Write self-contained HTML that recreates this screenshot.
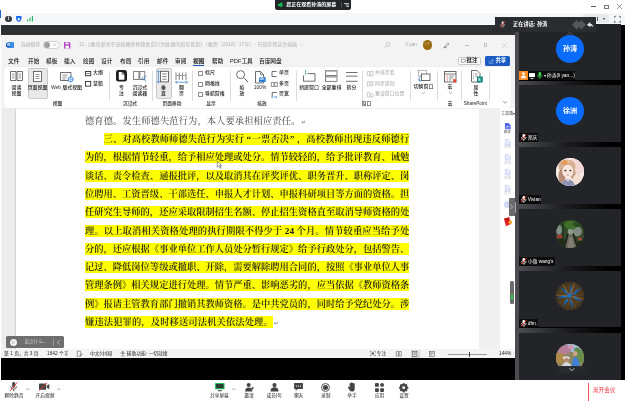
<!DOCTYPE html>
<html lang="zh-CN">
<head>
<meta charset="utf-8">
<title>会议</title>
<style>
html,body{margin:0;padding:0;}
body{width:625px;height:401px;position:relative;overflow:hidden;background:#fff;
 font-family:"Liberation Sans","Noto Sans CJK SC",sans-serif;color:#333;}
#root{position:absolute;left:0;top:0;width:625px;height:401px;overflow:hidden;background:#fff;will-change:transform;}
.a{position:absolute;}
.t{position:absolute;white-space:nowrap;line-height:1;}
svg{position:absolute;overflow:visible;}
/* ---------- top bars ---------- */
#titlebar{left:0;top:0;width:625px;height:13px;background:#fff;}
#lightbar{left:0;top:13px;width:625px;height:11.4px;background:#f6f7f9;}
#darkbar{left:0;top:25px;width:515px;height:9.7px;background:#2c3033;}
#pill{left:275.2px;top:0;width:75.6px;height:9.6px;background:#222427;border-radius:0 0 2.5px 2.5px;}
/* ---------- word ---------- */
#word{left:0;top:34.5px;width:515px;height:324px;background:#f3f3f3;overflow:hidden;}
#ribbon{left:4px;top:32.5px;width:507px;height:40.5px;background:#fff;border-radius:3px;box-shadow:0 0 1px rgba(0,0,0,.18);}
.tab{font-size:5.7px;color:#1a1a1a;top:24.2px;font-weight:500;}
.gl{font-size:4.7px;color:#1c1c1c;font-weight:500;top:67.3px;transform:translateX(-50%);}
.bl{font-size:4.9px;color:#1c1c1c;font-weight:500;transform:translateX(-50%);text-align:center;line-height:6.1px;}
.sl{font-size:4.9px;color:#1c1c1c;font-weight:500;}
.dv{width:0.6px;background:#dcdcdc;top:36px;height:30px;}
.sel{background:#e9e9e9;border:0.5px solid #c8c8c8;border-radius:1.5px;box-sizing:border-box;}
/* ---------- document ---------- */
#page{left:14.5px;top:74.5px;width:465px;height:240px;background:#fff;border-left:0.6px solid #d4d4d4;}
.ln{position:absolute;left:85px;width:324.2px;height:12.0px;font-family:"Liberation Serif","Noto Serif CJK SC",serif;
 font-size:9.27px;line-height:12.7px;font-weight:600;color:#1c1c1c;white-space:nowrap;text-align:justify;text-align-last:justify;}
.hl{background:#ffff00;}
.pm{font-family:"DejaVu Sans",sans-serif;font-size:5.8px;font-weight:400;color:#6a6a6a;margin-left:0.8px;vertical-align:0.3px;letter-spacing:0;}
/* ---------- right panel ---------- */
#rp{left:515px;top:25px;width:110px;height:354.6px;background:#000;}
#strip{left:515px;top:25px;width:4.2px;height:354.6px;background:#4a4c50;}
.tile{position:absolute;left:519.2px;width:101.5px;height:56.7px;background:#232427;}
.av{position:absolute;left:556px;width:28px;height:28px;border-radius:50%;overflow:hidden;}
.avt{color:#fff;font-weight:700;font-size:7.1px;text-align:center;line-height:28.8px;background:#0a6cff;}
.tag{position:absolute;left:519.2px;height:8.8px;background:#0c0c0d;color:#fff;font-size:4.8px;line-height:9.6px;white-space:nowrap;overflow:hidden;}
/* ---------- toolbar ---------- */
#toolbar{left:0;top:379.6px;width:625px;height:21.4px;background:#fff;}
.tl{font-size:4.7px;color:#222;top:14.8px;transform:translateX(-50%);}
</style>
</head>
<body>
<div id="root">
<!-- ======= top title bar ======= -->
<div class="a" id="titlebar"></div>
<div class="a" id="lightbar"></div>
<div class="a" id="darkbar"></div>
<div class="a" style="left:0;top:9.5px;width:1.2px;height:8.5px;background:#1e63d8;"></div>
<div class="a" id="pill">
  <svg style="left:3px;top:2.1px" width="5.6" height="5.6" viewBox="0 0 10 10"><path d="M0 3h3l4-3v10l-4-3H0z" fill="#19c15a"/><path d="M8.2 2.5q2 2.5 0 5" stroke="#19c15a" stroke-width="1.2" fill="none"/></svg>
  <div class="t" style="left:11px;top:2.4px;font-size:5px;color:#fff;font-weight:700;">您正在观看孙涛的屏幕</div>
  <div class="a" style="left:65.4px;top:1.5px;width:0.5px;height:6.5px;background:#4a4c50;"></div>
  <svg style="left:68.4px;top:2.8px" width="5" height="4" viewBox="0 0 10 8"><path d="M0 1h10M3 4h7M5 7h5" stroke="#fff" stroke-width="1.4"/></svg>
</div>
<!-- window controls -->
<div class="a" style="left:590.8px;top:6.1px;width:5.4px;height:0.7px;background:#555;"></div>
<div class="a" style="left:604.4px;top:4.8px;width:4.4px;height:4.2px;border:0.6px solid #777;box-sizing:border-box;"></div>
<svg style="left:616.6px;top:4.4px" width="5" height="5" viewBox="0 0 10 10"><path d="M0 0L10 10M10 0L0 10" stroke="#444" stroke-width="1.1"/></svg>
<!-- light bar icons -->
<div class="a" style="left:5.2px;top:15.6px;width:6.6px;height:6.6px;border-radius:50%;background:#3a3c40;"></div>
<div class="t" style="left:7.7px;top:16.6px;font-size:4.8px;color:#fff;font-weight:700;">i</div>
<svg style="left:16px;top:16px" width="5.6" height="6" viewBox="0 0 10 11"><path d="M0 0h10v5q0 4-5 6q-5-2-5-6z" fill="#1e6bf0"/><path d="M3 4h4v2q0 1.5-2 2.500q-2-1-2-2.500z" fill="#fff"/></svg>
<svg style="left:27.4px;top:16.4px" width="6" height="5.4" viewBox="0 0 10 9"><path d="M1 9V6M5 9V3M9 9V0" stroke="#17b75a" stroke-width="1.8"/></svg>
<div class="a" style="left:583px;top:14.400px;width:26px;height:8.800px;background:#e9eaec;border-radius:1px;"></div>
<div class="a" style="left:597px;top:16.500px;width:1px;height:4.500px;background:#55585c;"></div>
<div class="a" style="left:602.6px;top:18.200px;width:0;height:0;border-left:1.5px solid transparent;border-right:1.5px solid transparent;border-top:2.2px solid #2e2e2e;"></div>
<svg style="left:613.6px;top:15.6px" width="7" height="6.6" viewBox="0 0 10 10"><path d="M0.500 3V0.500h2.500M7 0.500h2.500v2.500M9.500 7v2.500H7M3 9.500H0.500V7" stroke="#444" stroke-width="1" fill="none"/></svg>

<!-- ======= shared Word window ======= -->
<div class="a" id="word">
  <!--WORD-TITLE-->
  <div class="a" style="left:7px;top:7.8px;width:6.800px;height:5.600px;background:#3b8de4;border-radius:0.800px;"></div>
  <div class="a" style="left:6.400px;top:8.9px;width:4px;height:4px;background:#1a5cc0;border-radius:0.500px;"></div>
  <div class="t" style="left:6.900px;top:9.2px;font-size:3.400px;color:#fff;font-weight:700;">W</div>
  <div class="t" style="left:21px;top:8.5px;font-size:4.800px;color:#a6a6a6;">自动保存</div>
  <div class="a" style="left:42.500px;top:6.5px;width:17px;height:7.800px;border:0.600px solid #d2d2d2;border-radius:3.900px;background:#fff;box-sizing:border-box;"></div>
  <div class="a" style="left:44px;top:7.6px;width:5.600px;height:5.600px;border-radius:50%;background:#a0a0a0;"></div>
  <svg style="left:53px;top:8.6px" width="3.600" height="3.600" viewBox="0 0 10 10"><path d="M0.500 0.500L9.500 9.500M9.500 0.500L0.500 9.500" stroke="#b5b5b5" stroke-width="1.600"/></svg>
  <svg style="left:63.800px;top:7.3px" width="6.400" height="6.400" viewBox="0 0 10 10"><path d="M0 0h8.500L10 1.500V10H0z" fill="#b146c2"/><rect x="2.200" y="0.800" width="5" height="2.800" fill="#fff"/><rect x="2.200" y="5.800" width="5.600" height="4.200" fill="#fff"/></svg>
  <div class="t" style="left:79px;top:8.6px;font-size:4.960px;color:#b0b0b0;letter-spacing:0.030px;">11.《教育部关于高校教师师德失范行为处理的指导意见》（教师〔2018〕17号）- 已保存到这台电脑</div>
  <svg style="left:300.400px;top:9.5px" width="3.600" height="2.200" viewBox="0 0 10 6"><path d="M0.500 0.500L5 5L9.500 0.500" stroke="#aaa" stroke-width="1.300" fill="none"/></svg>
  <svg style="left:384px;top:7.3px" width="6.400" height="6.400" viewBox="0 0 10 10"><circle cx="6.200" cy="3.800" r="3" fill="none" stroke="#b5b5b5" stroke-width="1"/><path d="M4 6L0.500 9.500" stroke="#b5b5b5" stroke-width="1.100"/></svg>
  <div class="t" style="left:405.400px;top:7.9px;font-size:5px;color:#ababab;">li yan</div>
  <div class="a" style="left:422.600px;top:5.7px;width:9.600px;height:9.600px;border-radius:50%;background:#9a6a13;"></div>
  <div class="t" style="left:425.200px;top:8.5px;font-size:3.800px;color:#e8cf9a;">LY</div>
  <svg style="left:443px;top:7.5px" width="7" height="6" viewBox="0 0 12 10"><path d="M3 7L8.500 1.500L10.500 3.500L5 9L2 10z" fill="none" stroke="#555" stroke-width="0.900"/><path d="M1 9.800q3-2 5 0" stroke="#555" stroke-width="0.700" fill="none"/></svg>
  <div class="a" style="left:464.800px;top:10.3px;width:4.400px;height:0.600px;background:#bdbdbd;"></div>
  <div class="a" style="left:483.600px;top:8.5px;width:3.800px;height:3.800px;border:0.600px solid #c4c4c4;box-sizing:border-box;"></div>
  <svg style="left:502px;top:8.1px" width="4.800" height="4.800" viewBox="0 0 10 10"><path d="M0 0L10 10M10 0L0 10" stroke="#bdbdbd" stroke-width="1.200"/></svg>
  <!--WORD-TABS-->
  <div class="t tab" style="left:8px">文件</div>
  <div class="t tab" style="left:28px">开始</div>
  <div class="t tab" style="left:46px">模板</div>
  <div class="t tab" style="left:64px">插入</div>
  <div class="t tab" style="left:83px">绘图</div>
  <div class="t tab" style="left:101px">设计</div>
  <div class="t tab" style="left:120px">布局</div>
  <div class="t tab" style="left:138px">引用</div>
  <div class="t tab" style="left:157px">邮件</div>
  <div class="t tab" style="left:175px">审阅</div>
  <div class="t tab" style="left:193px;font-weight:700;color:#222">视图</div>
  <div class="t tab" style="left:212px">帮助</div>
  <div class="t tab" style="left:230px">PDF工具</div>
  <div class="t tab" style="left:259px">百度网盘</div>
  <div class="a" style="left:193px;top:30.7px;width:11.400px;height:0.900px;background:#185abd;"></div>
  <div class="a" style="left:458px;top:22.1px;width:23px;height:8.600px;background:#fff;border:0.500px solid #c9c9c9;border-radius:1.400px;box-sizing:border-box;"></div>
  <svg style="left:460.600px;top:24.3px" width="4.600" height="4.200" viewBox="0 0 10 9"><path d="M0.500 0.500h9v6H4.500L2.500 8.500V6.500H0.500z" fill="none" stroke="#444" stroke-width="1"/></svg>
  <div class="t" style="left:466.600px;top:23.7px;font-size:5.400px;color:#222;font-weight:700;">批注</div>
  <div class="a" style="left:485px;top:21.7px;width:25px;height:9.400px;background:#1b5cc4;border-radius:1.600px;"></div>
  <svg style="left:489.400px;top:24.1px" width="4.600" height="4.600" viewBox="0 0 10 10"><path d="M0.500 3.500v6h8v-3" fill="none" stroke="#cfe0ff" stroke-width="1"/><path d="M4 6.500q0.500-4 5-4M7 0.500l2.500 2l-2.500 2" fill="none" stroke="#cfe0ff" stroke-width="1"/></svg>
  <div class="t" style="left:495.400px;top:23.7px;font-size:5.400px;color:#fff;font-weight:700;">共享</div>
  <div class="a" id="ribbon"></div>
  <!--WORD-RIBBON-->
  <div class="a sel" style="left:27.500px;top:33.9px;width:20px;height:30.600px;"></div>
  <div class="a sel" style="left:155.500px;top:33.9px;width:16px;height:30.600px;"></div>
  <div class="a dv" style="left:109px;"></div>
  <div class="a dv" style="left:151.6px;"></div>
  <div class="a dv" style="left:192px;"></div>
  <div class="a dv" style="left:229.6px;"></div>
  <div class="a dv" style="left:296px;"></div>
  <div class="a dv" style="left:362.4px;"></div>
  <div class="a dv" style="left:410.4px;"></div>
  <div class="a dv" style="left:437.4px;"></div>
  <div class="a dv" style="left:461.3px;"></div>
  <div class="a dv" style="left:489.4px;"></div>
  <div class="t gl" style="left:57.5px;">视图</div>
  <div class="t gl" style="left:130px;">沉浸式</div>
  <div class="t gl" style="left:172px;">页面移动</div>
  <div class="t gl" style="left:211px;">显示</div>
  <div class="t gl" style="left:262px;">缩放</div>
  <div class="t gl" style="left:366.5px;">窗口</div>
  <div class="t gl" style="left:450px;">宏</div>
  <div class="t gl" style="left:475.3px;">SharePoint</div>
  <svg style="left:10px;top:36.5px" width="13" height="10" viewBox="0 0 13 10"><path d="M0.500 0.500h5.500v9H0.500zM7 0.500h5.500v9H7z" fill="none" stroke="#4a4a4a" stroke-width="0.800"/><path d="M2 3h2.500M2 5h2.500M2 7h2.500M8.500 3h2.500M8.500 5h2.500M8.500 7h2.500" stroke="#4a4a4a" stroke-width="0.600"/></svg>
  <div class="t bl" style="left:16.5px;top:50.1px">阅读<br>视图</div>
  <svg style="left:33px;top:36.1px" width="9" height="11" viewBox="0 0 9 11"><rect x="0.500" y="0.500" width="8" height="10" fill="#fff" stroke="#4a4a4a" stroke-width="0.800"/><path d="M2.500 3.500h4M2.500 5.500h4M2.500 7.500h4" stroke="#4a4a4a" stroke-width="0.600"/></svg>
  <div class="t bl" style="left:37.5px;top:50.1px">页面视图</div>
  <svg style="left:60px;top:37.5px" width="13" height="10" viewBox="0 0 13 10"><path d="M0.500 0.500h10.500v8H0.500z" fill="none" stroke="#4a4a4a" stroke-width="0.800"/><path d="M2.500 3h5M2.500 5h4M2.500 7h3" stroke="#4a4a4a" stroke-width="0.600"/><circle cx="10.600" cy="7.300" r="2.500" fill="#fff" stroke="#2b7cd3" stroke-width="0.900"/><path d="M8.100 7.300h5M10.600 4.800v5" stroke="#2b7cd3" stroke-width="0.500"/></svg>
  <div class="t bl" style="left:66.5px;top:50.1px">Web 版式视图</div>
  <svg style="left:85.3px;top:36.5px" width="6.2" height="5.2" viewBox="0 0 6 5"><rect x="0.450" y="0.450" width="5.100" height="4.100" fill="none" stroke="#333" stroke-width="0.900"/><path d="M1.500 2.500h3" stroke="#333" stroke-width="0.700"/></svg>
  <div class="t sl" style="left:93px;top:36.7px;">大纲</div>
  <svg style="left:85.3px;top:46.9px" width="6.2" height="5.6" viewBox="0 0 6 5.500"><rect x="0.450" y="0.450" width="5.100" height="4.600" fill="none" stroke="#333" stroke-width="0.900"/></svg>
  <div class="t sl" style="left:93px;top:47.3px;">草稿</div>
  <svg style="left:116px;top:35.9px" width="11" height="11.6" viewBox="0 0 11 11.600"><rect x="0" y="0" width="11" height="11.600" rx="2.400" fill="#1e1e1e"/><path d="M2.800 2h3.600L8.400 4v5.800H2.800z" fill="#fff"/><path d="M6.200 2v2.200h2.200" fill="none" stroke="#1e1e1e" stroke-width="0.700"/></svg>
  <div class="t bl" style="left:121.5px;top:50.1px">专<br>注</div>
  <svg style="left:133px;top:36.1px" width="14" height="11" viewBox="0 0 14 11"><path d="M0.500 0.500h5.500v8H0.500zM6.800 0.500h5v8h-5z" fill="#fff" stroke="#4a4a4a" stroke-width="0.700"/><path d="M10.200 5.800l-1.600 1.700l1.600 1.700M12.800 4.600l-2 2.900l2 2.900" fill="none" stroke="#2b7cd3" stroke-width="0.800"/></svg>
  <div class="t bl" style="left:139.8px;top:50.1px">沉浸式<br>阅读器</div>
  <svg style="left:157px;top:35.1px" width="12" height="13.6" viewBox="0 0 12 13.600"><rect x="3.500" y="1.300" width="8" height="10.600" fill="#fff" stroke="#4a4a4a" stroke-width="0.800"/><path d="M5.300 4h4.400M5.300 6.600h4.400M5.300 9.200h4.400" stroke="#4a4a4a" stroke-width="0.700"/><path d="M1.400 0.800v12M0.200 2.200L1.400 0.600L2.600 2.200M0.200 11.400L1.400 13L2.600 11.400" fill="none" stroke="#2b7cd3" stroke-width="0.700"/></svg>
  <div class="t bl" style="left:163.5px;top:50.1px">垂<br>直</div>
  <svg style="left:175px;top:37.1px" width="13" height="11.6" viewBox="0 0 13 11.600"><path d="M1 0.500v7.500M4.300 0.500v7.500M7.600 0.500v7.500M11 0.500v7.500" stroke="#4a4a4a" stroke-width="0.700"/><path d="M1.800 3.500h2M5 3.500h2M8.300 3.500h2" stroke="#4a4a4a" stroke-width="0.600"/><path d="M0.500 10.200h12M2 9L0.500 10.200L2 11.400M11 9l1.500 1.200L11 11.400" fill="none" stroke="#2b7cd3" stroke-width="0.700"/></svg>
  <div class="t bl" style="left:181.5px;top:50.1px">翻<br>页</div>
  <div class="a" style="left:197.500px;top:36.4px;width:5px;height:5px;border:0.600px solid #8a8a8a;border-radius:0.800px;box-sizing:border-box;background:#fff;"></div>
  <div class="t sl" style="left:205px;top:36.5px;">标尺</div>
  <div class="a" style="left:197.500px;top:47.0px;width:5px;height:5px;border:0.600px solid #8a8a8a;border-radius:0.800px;box-sizing:border-box;background:#fff;"></div>
  <div class="t sl" style="left:205px;top:47.1px;">网格线</div>
  <div class="a" style="left:197.500px;top:57.6px;width:5px;height:5px;border:0.600px solid #8a8a8a;border-radius:0.800px;box-sizing:border-box;background:#fff;"></div>
  <div class="t sl" style="left:205px;top:57.7px;">导航窗格</div>
  <svg style="left:236px;top:35.5px" width="12.5" height="12.5" viewBox="0 0 12.500 12.500"><circle cx="4.600" cy="4.600" r="4" fill="none" stroke="#4a4a4a" stroke-width="0.800"/><path d="M7.500 7.500L12 12" stroke="#4a4a4a" stroke-width="0.900"/></svg>
  <div class="t bl" style="left:242px;top:50.1px">缩<br>放</div>
  <svg style="left:255px;top:36.1px" width="11" height="12.5" viewBox="0 0 11 12.500"><path d="M0.500 0.500h5L8.500 3.500v8.500H0.500z" fill="#fff" stroke="#4a4a4a" stroke-width="0.800"/><path d="M5.500 0.500v3h3" fill="none" stroke="#4a4a4a" stroke-width="0.600"/><rect x="4" y="6" width="6.600" height="5" fill="#2b7cd3"/></svg>
  <div class="t" style="left:259.200px;top:43.1px;font-size:2.800px;color:#fff;font-weight:700;">100</div>
  <div class="t bl" style="left:260px;top:50.1px">100%</div>
  <svg style="left:271px;top:36.3px" width="6" height="6" viewBox="0 0 6 6"><path d="M5.500 0.500H1v5h4.500" fill="none" stroke="#4a4a4a" stroke-width="0.800"/></svg>
  <div class="t sl" style="left:279px;top:36.5px;">单页</div>
  <svg style="left:270.5px;top:47.1px" width="7" height="5" viewBox="0 0 7 5"><path d="M0.400 0.500h2.600v4H0.400zM3.800 0.500h2.600v4H3.800z" fill="none" stroke="#4a4a4a" stroke-width="0.600"/></svg>
  <div class="t sl" style="left:279px;top:47.1px;">多页</div>
  <svg style="left:271px;top:57.1px" width="6.5" height="6" viewBox="0 0 6.500 6"><path d="M5.800 0.500H1.200v3.500" fill="none" stroke="#4a4a4a" stroke-width="0.800"/><path d="M0.500 5h5.500M1.500 4.200L0.500 5l1 0.800M5 4.200l1 0.800l-1 0.800" fill="none" stroke="#2b7cd3" stroke-width="0.600"/></svg>
  <div class="t sl" style="left:279px;top:57.7px;">页宽</div>
  <svg style="left:303px;top:35.1px" width="12.5" height="12" viewBox="0 0 12.500 12"><path d="M4.500 3.600h7.500v7.600H0.500V5.500" fill="none" stroke="#4a4a4a" stroke-width="0.800"/><path d="M2.600 0.200v4.600" stroke="#21a366" stroke-width="0.800"/></svg>
  <div class="t bl" style="left:309px;top:50.1px">新建窗口</div>
  <svg style="left:325px;top:35.5px" width="12.5" height="12" viewBox="0 0 12.500 12"><rect x="0.500" y="0.500" width="11.500" height="5" fill="#fff" stroke="#4a4a4a" stroke-width="0.700"/><rect x="0.500" y="6.300" width="11.500" height="5" fill="#fff" stroke="#4a4a4a" stroke-width="0.700"/><rect x="0.500" y="0.500" width="11.500" height="1.500" fill="#bbb"/><rect x="0.500" y="6.300" width="11.500" height="1.500" fill="#bbb"/></svg>
  <div class="t bl" style="left:331.5px;top:50.1px">全部重排</div>
  <svg style="left:346px;top:37.1px" width="11.5" height="10" viewBox="0 0 11.500 10"><path d="M0 0.500h11.500M0 9.300h11.500" stroke="#4a4a4a" stroke-width="0.800"/><path d="M0 4.200h11.500" stroke="#999" stroke-width="1.400"/></svg>
  <div class="t bl" style="left:351.5px;top:50.1px">拆分</div>
  <svg style="left:367px;top:36.3px" width="6.5" height="5.5" viewBox="0 0 6.500 5.500"><path d="M0.400 0.500h2.400v4.500H0.400zM3.700 0.500h2.400v4.500H3.700z" fill="none" stroke="#b9b9b9" stroke-width="0.700"/></svg>
  <div class="t sl" style="left:375px;top:36.5px;color:#b9b9b9">并排查看</div>
  <svg style="left:367px;top:46.9px" width="6.5" height="5.5" viewBox="0 0 6.500 5.500"><path d="M0.400 0.500h2.400v4.500H0.400zM4 0.500h2v4.500H4z" fill="none" stroke="#b9b9b9" stroke-width="0.700"/></svg>
  <div class="t sl" style="left:375px;top:47.1px;color:#b9b9b9">同步滚动</div>
  <svg style="left:367px;top:57.5px" width="6.5" height="5.5" viewBox="0 0 6.500 5.500"><path d="M0.400 0.500h2.400v4.500H0.400zM3.700 2h2.400v3H3.700z" fill="none" stroke="#b9b9b9" stroke-width="0.700"/></svg>
  <div class="t sl" style="left:375px;top:57.7px;color:#b9b9b9">重设窗口位置</div>
  <svg style="left:417px;top:35.1px" width="13.5" height="12.5" viewBox="0 0 13.500 12.500"><rect x="1.500" y="0.500" width="8" height="5.500" fill="#fff" stroke="#999" stroke-width="0.700"/><rect x="4.500" y="4" width="8.500" height="6.500" fill="#fff" stroke="#4a4a4a" stroke-width="0.800"/><path d="M3.500 6.500q-3 1.500-1 4.500l1.800-0.300M2.500 11l0.200-1.800" fill="none" stroke="#2b7cd3" stroke-width="0.800"/></svg>
  <div class="t bl" style="left:423.5px;top:49.7px">切换窗口</div>
  <svg style="left:422px;top:57.9px" width="3" height="1.8" viewBox="0 0 10 6"><path d="M0.500 0.500L5 5L9.500 0.500" stroke="#4a4a4a" stroke-width="1.500" fill="none"/></svg>
  <svg style="left:444px;top:36.1px" width="12.5" height="12" viewBox="0 0 12.500 12"><rect x="0.500" y="0.500" width="11.500" height="10.500" fill="#fff" stroke="#4a4a4a" stroke-width="0.800"/><path d="M0.500 3h11.500" stroke="#4a4a4a" stroke-width="0.700"/><path d="M2.500 5h1.500M2.500 7h1.500M2.500 9h1.500" stroke="#e8443a" stroke-width="0.700"/><path d="M5 5h5M5 7h4M5 9h2" stroke="#4a4a4a" stroke-width="0.600"/><path d="M8.600 8.200h3.600v3.400H9.800z" fill="#e8443a"/></svg>
  <div class="t bl" style="left:450px;top:49.7px">宏</div>
  <svg style="left:448.5px;top:57.9px" width="3" height="1.8" viewBox="0 0 10 6"><path d="M0.500 0.500L5 5L9.500 0.500" stroke="#4a4a4a" stroke-width="1.500" fill="none"/></svg>
  <svg style="left:470.5px;top:35.5px" width="12" height="12.5" viewBox="0 0 12 12.500"><path d="M0.500 0.500h5.500L9 3.500v8.500H0.500z" fill="#fff" stroke="#4a4a4a" stroke-width="0.800"/><path d="M2 4h1M4 4h2.500M2 6.200h1M4 6.200h2.500M2 8.400h1" stroke="#4a4a4a" stroke-width="0.600"/><rect x="6" y="6.600" width="5.800" height="5.800" rx="0.600" fill="#0f8a7f"/></svg>
  <div class="t" style="left:478.100px;top:43.0px;font-size:4px;color:#fff;font-weight:700;">S</div>
  <div class="t bl" style="left:476px;top:50.1px">属<br>性</div>
  <svg style="left:503.4px;top:66.7px" width="4.2" height="2.6" viewBox="0 0 10 6"><path d="M0.500 0.500L5 5L9.500 0.500" stroke="#4a4a4a" stroke-width="1.300" fill="none"/></svg>
  <!-- document area -->
  <div class="a" style="left:1.5px;top:73.5px;width:13px;height:241px;background:#ececec;"></div>
  <div class="a" id="page"></div>
  <div class="a" style="left:479.3px;top:73px;width:21px;height:241.5px;background:#f0f0f0;"></div>
  <div class="a" style="left:500px;top:73px;width:15px;height:241.5px;background:#fff;"></div>
  <!--DOC-->
  <div class="ln" style="top:80.50px;font-weight:400;color:#444;text-align-last:left;letter-spacing:0.1px;">德育德。发生师德失范行为，本人要承担相应责任。<span class="pm">↵</span></div>
  <div class="ln hl" style="top:98.50px;left:103.6px;width:305.6px;">三、对高校教师师德失范行为实行<span style="margin:0 0.5px 0 2.5px">“</span>一票否决<span style="margin:0 2.5px 0 0.5px">”</span>，高校教师出现违反师德行</div>
  <div class="ln hl" style="top:116.80px;">为的，根据情节轻重，给予相应处理或处分。情节较轻的，给予批评教育、诫勉</div>
  <div class="ln hl" style="top:135.10px;">谈话、责令检查、通报批评，以及取消其在评奖评优、职务晋升、职称评定、岗</div>
  <div class="ln hl" style="top:153.40px;">位聘用、工资晋级、干部选任、申报人才计划、申报科研项目等方面的资格。担</div>
  <div class="ln hl" style="top:171.70px;">任研究生导师的，还应采取限制招生名额、停止招生资格直至取消导师资格的处</div>
  <div class="ln hl" style="top:190.00px;">理。以上取消相关资格处理的执行期限不得少于 24 个月。情节较重应当给予处</div>
  <div class="ln hl" style="top:208.30px;">分的，还应根据《事业单位工作人员处分暂行规定》给予行政处分，包括警告、</div>
  <div class="ln hl" style="top:226.60px;">记过、降低岗位等级或撤职、开除，需要解除聘用合同的，按照《事业单位人事</div>
  <div class="ln hl" style="top:244.90px;">管理条例》相关规定进行处理。情节严重、影响恶劣的，应当依据《教师资格条</div>
  <div class="ln hl" style="top:263.20px;">例》报请主管教育部门撤销其教师资格。是中共党员的，同时给予党纪处分。涉</div>
  <div class="ln" style="top:281.50px;text-align-last:left;letter-spacing:0.13px;"><span class="hl" style="display:inline-block;height:12.0px;">嫌违法犯罪的，及时移送司法机关依法处理。</span><span class="pm">↵</span></div>
  <!--/DOC-->
  <!--SIDEBAR-->
  <div class="t" style="left:501px;top:77.1px;font-size:4px;color:#444;">工具箱▾</div>
  <svg style="left:504.800px;top:88.7px" width="5.600" height="6.400" viewBox="0 0 8 9"><path d="M0 0h5l3 3v6H0z" fill="#5468ee"/><path d="M1.500 5h5M1.500 7h3" stroke="#fff" stroke-width="0.800"/></svg>
  <div class="t" style="left:507.500px;top:96.5px;font-size:3.400px;color:#555;transform:translateX(-50%);">翻译</div>
  <svg style="left:504.800px;top:104.1px" width="5.600" height="6.400" viewBox="0 0 8 9"><path d="M0.600 0.600h4.200l2.600 2.600v5.200H0.600z" fill="#eef0fd" stroke="#c3caf6" stroke-width="1.100"/><path d="M2 5.500h4" stroke="#c3caf6" stroke-width="0.900"/></svg>
  <div class="t" style="left:507.500px;top:111.9px;font-size:3.400px;color:#c8c8d4;transform:translateX(-50%);">转换</div>
  <svg style="left:504.800px;top:119.5px" width="5.600" height="6.400" viewBox="0 0 8 9"><path d="M0.600 0.600h4.200l2.600 2.600v5.200H0.600z" fill="#eef0fd" stroke="#c3caf6" stroke-width="1.100"/><path d="M2 5.500h4" stroke="#c3caf6" stroke-width="0.900"/></svg>
  <div class="t" style="left:507.500px;top:127.3px;font-size:3.400px;color:#c8c8d4;transform:translateX(-50%);">编辑</div>
  <svg style="left:504.800px;top:134.5px" width="5.600" height="6.400" viewBox="0 0 8 9"><path d="M0.600 0.600h4.200l2.600 2.600v5.200H0.600z" fill="#eef0fd" stroke="#c3caf6" stroke-width="1.100"/><path d="M2 5.500h4" stroke="#c3caf6" stroke-width="0.900"/></svg>
  <div class="t" style="left:507.500px;top:142.3px;font-size:3.400px;color:#c8c8d4;transform:translateX(-50%);">压缩</div>
  <svg style="left:504.800px;top:150.1px" width="5.600" height="6.400" viewBox="0 0 8 9"><path d="M0.600 0.600h4.200l2.600 2.600v5.200H0.600z" fill="#eef0fd" stroke="#c3caf6" stroke-width="1.100"/><path d="M2 5.500h4" stroke="#c3caf6" stroke-width="0.900"/></svg>
  <div class="t" style="left:507.500px;top:157.9px;font-size:3.400px;color:#c8c8d4;transform:translateX(-50%);">更多</div>
  <div class="a" style="left:503.800px;top:166.3px;width:7px;height:7px;border-radius:50%;background:#cdd6f6;"></div>
  <div class="a" style="left:508.600px;top:163.5px;width:6.600px;height:17.600px;background:#6b6b6b;border-radius:1px 0 0 1px;"></div>
  <svg style="left:510.400px;top:169.5px" width="3" height="5.400" viewBox="0 0 6 10"><path d="M0.800 0.500L5.200 5L0.800 9.500" stroke="#e8e8e8" stroke-width="1.200" fill="none"/></svg>
  <svg style="left:503px;top:182.1px" width="9.600" height="10" viewBox="0 0 10 10"><path d="M1 1.500L6.500 0L8.500 7L3 9.500z" fill="#e0261f"/><path d="M1 1.500l4.500 3L6.500 0" fill="#c21710"/><circle cx="7.600" cy="5.300" r="1.900" fill="#f8a229"/></svg>
  <div class="a" style="left:510.400px;top:246.5px;width:3.300px;height:23px;background:#6a6a6a;border-radius:1.600px;"></div>
  <div class="a" style="left:511.200px;top:259.5px;width:1.700px;height:6.400px;background:#35c24a;border-radius:0.800px;"></div>
  <!--STATUS-->
  <div class="a" style="left:0;top:314.5px;width:515px;height:9.500px;background:#f3f3f3;"></div>
  <div class="t" style="left:4px;top:317.8px;font-size:4.800px;color:#262626;">第 1 页，共 3 页</div>
  <div class="t" style="left:47px;top:317.8px;font-size:4.800px;color:#262626;">1642 个字</div>
  <svg style="left:77px;top:316.7px" width="5.600" height="5.600" viewBox="0 0 10 10"><path d="M0.500 0.500h6v9h-6z" fill="none" stroke="#444" stroke-width="0.900"/><path d="M5 6.500l1.800 2L9.800 4.500" fill="none" stroke="#444" stroke-width="1"/></svg>
  <div class="t" style="left:90px;top:317.8px;font-size:4.800px;color:#262626;">中文(中国)</div>
  <svg style="left:120px;top:316.5px" width="5.600" height="6" viewBox="0 0 10 11"><circle cx="5" cy="1.800" r="1.500" fill="#444"/><path d="M0.500 4h9M5 4v3.500M5 7.500L2.500 10.500M5 7.500l2.500 3" stroke="#444" stroke-width="1" fill="none"/></svg>
  <div class="t" style="left:126.6px;top:317.8px;font-size:4.800px;color:#262626;">辅助功能: 一切就绪</div>
  <svg style="left:370px;top:316.9px" width="5.600" height="5" viewBox="0 0 10 9"><path d="M0.500 3V0.500h2.500M7 0.500h2.500V3M9.500 6v2.500H7M3 8.500H0.500V6" fill="none" stroke="#444" stroke-width="0.900"/><rect x="3" y="2.800" width="4" height="3.400" fill="#444"/></svg>
  <div class="t" style="left:376.6px;top:317.8px;font-size:4.800px;color:#262626;">专注</div>
  <svg style="left:396.400px;top:316.7px" width="5.600" height="5.600" viewBox="0 0 10 10"><path d="M0.500 1h4v8h-4zM5.500 1h4v8h-4z" fill="none" stroke="#444" stroke-width="0.900"/></svg>
  <div class="a" style="left:410.600px;top:315.1px;width:9px;height:8.400px;background:#d8d8d8;"></div>
  <svg style="left:412.400px;top:316.7px" width="5.200" height="5.600" viewBox="0 0 9 10"><rect x="0.500" y="0.500" width="8" height="9" fill="#fff" stroke="#333" stroke-width="0.900"/><path d="M2 3h5M2 5h5M2 7h5" stroke="#333" stroke-width="0.800"/></svg>
  <svg style="left:429px;top:316.7px" width="5.600" height="5.600" viewBox="0 0 10 10"><rect x="0.500" y="0.500" width="9" height="9" fill="none" stroke="#444" stroke-width="0.900"/><path d="M2 3h6M2 5h6M2 7h4" stroke="#444" stroke-width="0.800"/></svg>
  <div class="a" style="left:448px;top:319.5px;width:39.400px;height:0.500px;background:#9a9a9a;"></div>
  <div class="a" style="left:469px;top:317.1px;width:1.200px;height:5px;background:#444;"></div>
  <div class="t" style="left:499px;top:317.8px;font-size:4.800px;color:#262626;">144%</div>
  <div class="a" style="left:6.300px;top:301.8px;width:57.700px;height:11.700px;background:#6e6e6e;border-radius:1.500px;"></div>
  <div class="a" style="left:9.500px;top:304.2px;width:7px;height:7px;border-radius:50%;background:#f4f4f4;"></div>
  <svg style="left:11px;top:306.3px" width="4" height="3.200" viewBox="0 0 8 6"><circle cx="2" cy="1" r="0.900" fill="#6e6e6e"/><circle cx="6" cy="1" r="0.900" fill="#6e6e6e"/><path d="M1.500 3.500q2.500 2.500 5 0" stroke="#6e6e6e" stroke-width="1" fill="none"/></svg>
  <div class="t" style="left:24.400px;top:305.4px;font-size:4.600px;color:#cfcfcf;">说点什么...</div>
  <div class="a" style="left:53px;top:304.1px;width:0.500px;height:7px;background:#9a9a9a;"></div>
  <svg style="left:56.600px;top:305.3px" width="3" height="4.800" viewBox="0 0 6 10"><path d="M5.200 0.500L0.800 5L5.200 9.500" stroke="#eee" stroke-width="1.300" fill="none"/></svg>
  <svg style="left:217px;top:126.1px" width="5" height="7.500" viewBox="0 0 8 12"><path d="M0.500 0.500V10L3 7.500L5 11.500L6.500 10.800L4.600 7H7.500z" fill="#fff" stroke="#333" stroke-width="0.800"/></svg>
</div>
<!-- black below shared screen -->
<div class="a" style="left:0;top:358.4px;width:515px;height:21.2px;background:#000;"></div>

<div class="a" style="left:0;top:24.4px;width:1.2px;height:355.2px;background:#fff;"></div>
<!-- ======= right participants panel ======= -->
<div class="a" id="rp"></div>
<div class="a" id="strip"></div>
<div class="a" style="left:515.2px;top:202px;width:1.3px;height:10.5px;background:#a4a6aa;border-radius:0.6px;"></div>
<!--TILES-->
<div class="tile" style="top:23.8px;height:56.7px;"></div>
<div class="av avt" style="top:35.1px;">孙涛</div>
<div class="tag" style="top:71.2px;width:56.3px;"><div class="a" style="left:0;top:0;width:8.6px;height:8.8px;background:#ff8a1f;"></div><svg style="left:1.8px;top:1.300px" width="5" height="6.400" viewBox="0 0 10 12"><circle cx="5" cy="3" r="2.800" fill="#fff"/><path d="M0 12q0-5.500 5-5.500q5 0 5 5.500z" fill="#fff"/></svg><svg style="left:9.400px;top:1.500px" width="6" height="6.200" viewBox="0 0 10 10"><rect x="0" y="0" width="10" height="6.500" fill="#fff"/><rect x="2.500" y="8" width="5" height="1.500" fill="#fff"/></svg><svg style="left:17.800px;top:1px" width="5.600" height="6.800" viewBox="0 0 10 12"><rect x="2.800" y="0" width="4.400" height="7.400" rx="2.200" fill="#3ddc4e"/><path d="M1 5.500q0 4 4 4q4 0 4-4M5 9.500V12" stroke="#3ddc4e" stroke-width="1.400" fill="none"/></svg><span style="margin-left:24.600px;font-size:3.600px;vertical-align:0.300px;">▾</span><span style="margin-left:1px;">孙涛(li yan...)</span></div>
<div class="tile" style="top:85.3px;height:56.7px;"></div>
<div class="av avt" style="top:96.6px;">徐洲</div>
<div class="tag" style="top:133.2px;width:19px;"><svg style="left:2.200px;top:1.200px" width="5.600" height="6.800" viewBox="0 0 10 12"><rect x="2.600" y="0" width="4.800" height="7.400" rx="2.400" fill="#fff"/><path d="M1 5.500q0 4 4 4q4 0 4-4M5 9.500V12" stroke="#fff" stroke-width="1.400" fill="none"/><path d="M0.300 11L9.700 0.500" stroke="#ff3b30" stroke-width="1.700"/></svg><span style="margin-left:8.600px;">郑庆</span></div>
<div class="tile" style="top:147.0px;height:56.7px;"></div>
<div class="av" style="top:158.3px;background:#f6ebe6;"><svg style="left:0;top:0" width="28" height="28" viewBox="0 0 28 28">
<rect width="28" height="28" fill="#f7ece8"/>
<ellipse cx="21" cy="8" rx="8" ry="9" fill="#f3d9d3"/>
<ellipse cx="11" cy="8.500" rx="8.500" ry="7" fill="#d4ae90"/>
<ellipse cx="6" cy="18" rx="3.600" ry="7" fill="#b88e76"/>
<ellipse cx="17" cy="16" rx="2.500" ry="5" fill="#c39a80"/>
<ellipse cx="11.800" cy="13.200" rx="5.600" ry="6.400" fill="#f8e6dc"/>
<ellipse cx="9" cy="4.600" rx="3.600" ry="2" fill="#e79a55"/>
<circle cx="12.500" cy="3.800" r="1.300" fill="#f0c9a0"/>
<ellipse cx="9.400" cy="12.600" rx="1.100" ry="0.800" fill="#3d2c28"/><ellipse cx="14.400" cy="12.600" rx="1.100" ry="0.800" fill="#3d2c28"/>
<ellipse cx="11.900" cy="17" rx="1.200" ry="0.600" fill="#d77c80"/>
<path d="M5 28q1.500-6.500 7-7q5 0.500 7.500 7z" fill="#8e92b4"/>
<path d="M9.500 21.500l2.500 2l2.500-2" fill="#f3dccf"/>
<ellipse cx="21.500" cy="21.500" rx="4.500" ry="5.500" fill="#f4dfd4"/>
</svg></div>
<div class="tag" style="top:194.9px;width:22.3px;"><svg style="left:2.200px;top:1.200px" width="5.600" height="6.800" viewBox="0 0 10 12"><rect x="2.600" y="0" width="4.800" height="7.400" rx="2.400" fill="#fff"/><path d="M1 5.500q0 4 4 4q4 0 4-4M5 9.500V12" stroke="#fff" stroke-width="1.400" fill="none"/><path d="M0.300 11L9.700 0.500" stroke="#ff3b30" stroke-width="1.700"/></svg><span style="margin-left:8.600px;">Vivian</span></div>
<div class="tile" style="top:208.9px;height:56.7px;"></div>
<div class="av" style="top:220.2px;background:#3c5230;"><svg style="left:0;top:0" width="28" height="28" viewBox="0 0 28 28">
<rect width="28" height="28" fill="#33452a"/>
<rect x="0" y="0" width="28" height="10" fill="#2f4c24"/>
<ellipse cx="21.500" cy="11.500" rx="4.500" ry="5" fill="#7d8a80"/>
<ellipse cx="14.500" cy="12" rx="2.800" ry="4" fill="#8c988c"/>
<ellipse cx="3" cy="10" rx="3" ry="5" fill="#7f8f86"/>
<ellipse cx="15" cy="5" rx="7" ry="4.200" fill="#3f6e2a"/>
<ellipse cx="22" cy="4" rx="5" ry="3" fill="#2c4a22"/>
<path d="M12.500 14.500h4l4.500 13.500h-12.500z" fill="#6a665e"/>
<path d="M13.500 17h2.500l2.500 11h-7z" fill="#827d74"/>
<path d="M12.200 13.500l-4 14.500M17 13.500l4.500 14.500" stroke="#161d14" stroke-width="1.300"/>
<rect x="6.600" y="3" width="0.900" height="23" fill="#1a2417"/>
<ellipse cx="3.600" cy="16.500" rx="3" ry="1.700" fill="#a3382f"/>
<ellipse cx="24" cy="19" rx="2" ry="1.600" fill="#b24a33"/>
<ellipse cx="4.500" cy="23" rx="5" ry="4" fill="#1f2d1a"/>
<ellipse cx="24.500" cy="24.500" rx="4.500" ry="3.500" fill="#1f2b1a"/>
</svg></div>
<div class="tag" style="top:256.8px;width:35.8px;"><svg style="left:2.200px;top:1.200px" width="5.600" height="6.800" viewBox="0 0 10 12"><rect x="2.600" y="0" width="4.800" height="7.400" rx="2.400" fill="#fff"/><path d="M1 5.500q0 4 4 4q4 0 4-4M5 9.500V12" stroke="#fff" stroke-width="1.400" fill="none"/><path d="M0.300 11L9.700 0.500" stroke="#ff3b30" stroke-width="1.700"/></svg><span style="margin-left:8.600px;">小微 wang&#39;s</span></div>
<div class="tile" style="top:270.8px;height:56.7px;"></div>
<div class="av" style="top:282.1px;background:#4a3a22;"><svg style="left:0;top:0" width="28" height="28" viewBox="0 0 28 28">
<rect width="28" height="28" fill="#4b3b24"/>
<path d="M14 13L3 3L9 12L1 16L10 16L6 26L13 18L17 27L17 17L27 20L19 13L26 5L17 10L15 1z" fill="#1b5c9e"/>
<path d="M14 13L8 6L11 12L6 15L11 15.500L9 21L13.500 16.500L15.500 22L16 15.500L22 17L17.500 13L21 8L16 11L14.500 5z" fill="#2273c4"/>
<path d="M14 14L2 8M14 14L24 3M14 14L26 24M14 14L3 22M14 14L12 0M14 14L28 12M14 14L11 28M14 14L21 28" stroke="#5e4220" stroke-width="1.700" opacity="0.950"/>
<path d="M14 14L0 13M14 14L19 0M14 14L27 17M14 14L6 1" stroke="#8a6430" stroke-width="1.200" opacity="0.950"/>
<circle cx="14" cy="14" r="13.500" fill="none" stroke="#3f3320" stroke-width="3.500" stroke-dasharray="2.500 1.500" opacity="0.900"/>
<circle cx="13.500" cy="13.500" r="2.200" fill="#1f6fc0"/>
</svg></div>
<div class="tag" style="top:318.7px;width:19px;"><svg style="left:2.200px;top:1.200px" width="5.600" height="6.800" viewBox="0 0 10 12"><rect x="2.600" y="0" width="4.800" height="7.400" rx="2.400" fill="#fff"/><path d="M1 5.500q0 4 4 4q4 0 4-4M5 9.500V12" stroke="#fff" stroke-width="1.400" fill="none"/><path d="M0.300 11L9.700 0.500" stroke="#ff3b30" stroke-width="1.700"/></svg><span style="margin-left:8.600px;">dfm.</span></div>
<div class="tile" style="top:332.8px;height:46.8px;"></div>
<div class="av" style="top:344.1px;background:#8a8a66;"><svg style="left:0;top:0" width="28" height="28" viewBox="0 0 28 28">
<rect width="28" height="28" fill="#8c8660"/>
<rect x="9" y="0" width="19" height="8" fill="#9cc0e0"/>
<ellipse cx="8" cy="5.500" rx="7.500" ry="5" fill="#b57f9a"/>
<ellipse cx="15" cy="3" rx="3" ry="2.500" fill="#c99ab0"/>
<ellipse cx="3.500" cy="14" rx="5" ry="5.500" fill="#b08a4a"/>
<ellipse cx="25" cy="12" rx="5" ry="6.500" fill="#6a8c4a"/>
<ellipse cx="21" cy="6" rx="3" ry="2.500" fill="#5f8a48"/>
<ellipse cx="19.200" cy="9.500" rx="2.300" ry="2.500" fill="#cfa48c"/>
<path d="M15.500 28q0-14.500 3.700-15q4.300 0.500 5 15z" fill="#3f7fd6"/>
<ellipse cx="10.300" cy="14" rx="3.400" ry="1.800" fill="#e9e9ec"/>
<ellipse cx="10.500" cy="16" rx="2.400" ry="2.500" fill="#b98f7a"/>
<path d="M5 28q0-9.500 5.500-10q5.500 0.500 6 10z" fill="#d9d9dc"/>
<rect x="0" y="22.500" width="28" height="5.500" fill="#33363a"/>
</svg></div>
<div class="a" style="left:519.2px;top:80.5px;width:105.8px;height:4.8px;background:linear-gradient(90deg,#4a4c50 0,#1c1c1e 45%,#000 85%);"></div>
<div class="a" style="left:519.2px;top:142.0px;width:105.8px;height:5.0px;background:linear-gradient(90deg,#4a4c50 0,#1c1c1e 45%,#000 85%);"></div>
<div class="a" style="left:519.2px;top:203.7px;width:105.8px;height:5.2px;background:linear-gradient(90deg,#4a4c50 0,#1c1c1e 45%,#000 85%);"></div>
<div class="a" style="left:519.2px;top:265.6px;width:105.8px;height:5.2px;background:linear-gradient(90deg,#4a4c50 0,#1c1c1e 45%,#000 85%);"></div>
<div class="a" style="left:519.2px;top:327.5px;width:105.8px;height:5.3px;background:linear-gradient(90deg,#4a4c50 0,#1c1c1e 45%,#000 85%);"></div>
<div class="a" style="left:556.5px;top:366px;width:30.5px;height:7.6px;background:rgba(40,41,44,.88);border-radius:1px;"></div>
<svg style="left:568.6px;top:368.300px" width="5.600" height="3.200" viewBox="0 0 10 6"><path d="M0.500 0.500L5 5L9.500 0.500" stroke="#fff" stroke-width="1.400" fill="none"/></svg>
<div class="a" style="left:495px;top:17.2px;width:101px;height:14.4px;background:#2b2c2f;"></div>
<svg style="left:500.400px;top:21px" width="5.400" height="7" viewBox="0 0 10 12"><rect x="3.200" y="0" width="3.600" height="7" rx="1.800" fill="#ddd"/><path d="M1.300 5.500q0 3.700 3.700 3.700q3.700 0 3.700-3.700M5 9.200V12" stroke="#ddd" stroke-width="1.100" fill="none"/><path d="M0.500 11L9.500 0.500" stroke="#ff3b30" stroke-width="1.600"/></svg>
<div class="t" style="left:513px;top:21.800px;font-size:5.200px;color:#fff;font-weight:700;">正在讲话: 孙涛</div>
<svg style="left:572px;top:19.800px" width="14" height="9.600" viewBox="0 0 14 9.600"><path d="M0 4.800L4.600 0L9.200 4.800L4.600 9.600zM4.800 4.800L9.400 0L14 4.800L9.400 9.600z" fill="#55575b"/></svg>
<svg style="left:587px;top:22px" width="6.400" height="5.400" viewBox="0 0 12 10"><path d="M0 5L6 0V3Q11 3 12 10Q10 6.500 6 7V10z" fill="#e8e8e8"/></svg>
<svg style="left:567px;top:31.600px" width="6" height="3" viewBox="0 0 12 6"><path d="M0 6L6 0.500L12 6" stroke="#777" stroke-width="1" fill="#2b2c2f"/></svg>
<!--/TILES-->

<!-- ======= bottom toolbar ======= -->
<div class="a" id="toolbar">
<!--TOOLBAR-->
<svg style="left:10.200px;top:2.500px" width="7.400" height="9.800" viewBox="0 0 10 13"><rect x="3" y="0" width="4" height="7.500" rx="2" fill="#444"/><path d="M1.200 5.800q0 3.800 3.800 3.800q3.800 0 3.800-3.800M5 9.600V12.500" stroke="#444" stroke-width="1.100" fill="none"/><path d="M0.300 12L9.700 0.500" stroke="#f0353a" stroke-width="1.300"/></svg>
<div class="t tl" style="left:14px;">解除静音</div>
<svg style="left:26.400px;top:8.200px" width="3.600" height="2.200" viewBox="0 0 10 6"><path d="M0.500 5.500L5 1L9.500 5.500" stroke="#555" stroke-width="1.400" fill="none"/></svg>
<svg style="left:39.200px;top:3.600px" width="10.600" height="7.600" viewBox="0 0 14 10"><rect x="0" y="0.500" width="9.500" height="8.500" rx="1.200" fill="#444"/><path d="M10.300 3.500L13.600 1.200V8.300L10.300 6z" fill="#444"/><path d="M0 10L10.500 0" stroke="#f0353a" stroke-width="1.300"/></svg>
<div class="t tl" style="left:45px;">开启视频</div>
<svg style="left:57.400px;top:8.200px" width="3.600" height="2.200" viewBox="0 0 10 6"><path d="M0.500 5.500L5 1L9.500 5.500" stroke="#555" stroke-width="1.400" fill="none"/></svg>
<svg style="left:214.6px;top:3.400px" width="9.600" height="8.400" viewBox="0 0 12 10.500"><rect x="0" y="0" width="12" height="7.800" rx="0.800" fill="#20c05c"/><rect x="1.300" y="1.300" width="9.400" height="5.200" fill="#2d3a33"/><rect x="3.500" y="9" width="5" height="1.300" fill="#444"/></svg>
<div class="t tl" style="left:219.4px;">共享屏幕</div>
<svg style="left:244.5px;top:3.400px" width="9" height="8.400" viewBox="0 0 11 10.500"><circle cx="4.500" cy="2.600" r="2.500" fill="#444"/><path d="M0 10.500q0-5 4.500-5q4.500 0 4.500 5z" fill="#444"/><path d="M7.500 6.500h3.500M9.250 4.800v3.400" stroke="#444" stroke-width="1.100"/></svg>
<div class="t tl" style="left:249px;">邀请</div>
<svg style="left:269.5px;top:3.400px" width="9" height="8.400" viewBox="0 0 11 10.500"><circle cx="5.500" cy="2.600" r="2.600" fill="#444"/><path d="M0.500 10.500q0-5.200 5-5.200q5 0 5 5.200z" fill="#444"/></svg>
<div class="t tl" style="left:274px;">成员(6)</div>
<svg style="left:294.1px;top:3.600px" width="9" height="8" viewBox="0 0 11 10"><path d="M0 0h11v7.500H4.500L2 10V7.500H0z" fill="#444"/><circle cx="3" cy="3.800" r="0.800" fill="#fff"/><circle cx="5.500" cy="3.800" r="0.800" fill="#fff"/><circle cx="8" cy="3.800" r="0.800" fill="#fff"/></svg>
<div class="t tl" style="left:298.6px;">聊天</div>
<svg style="left:321.2px;top:3.200px" width="9" height="9" viewBox="0 0 10 10"><circle cx="5" cy="5" r="4.400" fill="none" stroke="#444" stroke-width="1"/><circle cx="5" cy="5" r="2.800" fill="#444"/></svg>
<div class="t tl" style="left:325.7px;">录制</div>
<svg style="left:348.0px;top:2.800px" width="8" height="9.600" viewBox="0 0 10 12"><path d="M2 5V1.800q0.800-1 1.600 0V0.800q0.800-1 1.600 0v0.600q0.800-1 1.600 0V2q0.800-0.800 1.600 0V8q0 4-3.800 4Q2.500 12 0.500 8L0 6q1-1 2 0.600z" fill="#444"/></svg>
<div class="t tl" style="left:352px;">举手</div>
<svg style="left:375.1px;top:3.200px" width="9" height="9" viewBox="0 0 10 10"><rect x="0" y="0" width="4.300" height="4.300" rx="1" fill="#444"/><rect x="5.700" y="0" width="4.300" height="4.300" rx="2.150" fill="#444"/><rect x="0" y="5.700" width="4.300" height="4.300" rx="1" fill="#444"/><rect x="5.700" y="5.700" width="4.300" height="4.300" rx="1" fill="#444"/></svg>
<div class="t tl" style="left:379.6px;">应用</div>
<svg style="left:399.3px;top:3px" width="9.400" height="9.400" viewBox="0 0 10 10"><circle cx="5" cy="5" r="3.200" fill="none" stroke="#444" stroke-width="2.200"/><path d="M5 0v10M0 5h10M1.500 1.500l7 7M8.500 1.500l-7 7" stroke="#444" stroke-width="1.500"/><circle cx="5" cy="5" r="1.500" fill="#fff"/></svg>
<div class="t tl" style="left:404px;">设置</div>
<svg style="left:232.200px;top:8.200px" width="3.600" height="2.200" viewBox="0 0 10 6"><path d="M0.500 5.500L5 1L9.500 5.500" stroke="#555" stroke-width="1.400" fill="none"/></svg>
<div class="a" style="left:588.2px;top:3.400px;width:0.8px;height:18px;background:#f0545a;"></div>
<div class="t" style="left:593px;top:8.300px;font-size:5.600px;color:#f0353a;">离开会议</div>
</div>
</div>
</body>
</html>
